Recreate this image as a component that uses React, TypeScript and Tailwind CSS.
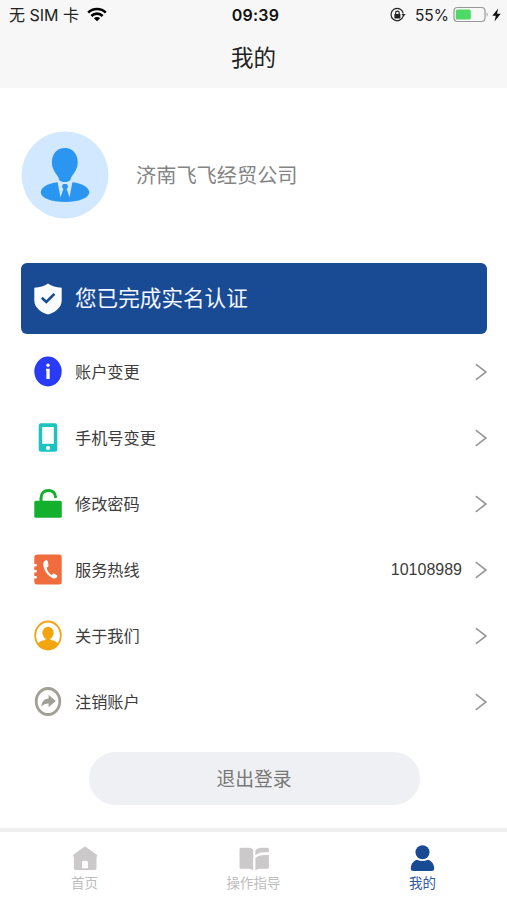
import type { ReactNode } from 'react';

const sans = "font-['Liberation_Sans','Noto_Sans_CJK_SC',sans-serif]";
const inter = "font-['Inter','Noto_Sans_CJK_SC',sans-serif]";

interface MenuItem {
  label: string;
  icon: ReactNode;
  value?: string;
}

function StatusBar() {
  return (
    <div className={`grid grid-cols-3 items-center h-[29px] pl-[9px] pr-[6px] leading-none text-[#222] ${inter}`}>
      <div className="flex items-center whitespace-nowrap">
        <span className="text-[16px]">无 SIM 卡</span>
        <svg className="w-[20px] h-[15px] ml-[8px]" viewBox="0 0 20 15" fill="none" stroke="#000" strokeWidth="2.6">
          <path d="M1.2 5.7a12.4 12.4 0 0 1 17.6 0" />
          <path d="M4.4 9a7.9 7.9 0 0 1 11.2 0" />
          <path d="M10 14.3 6.9 11.2a4.4 4.4 0 0 1 6.2 0z" fill="#000" stroke="none" />
        </svg>
      </div>
      <span className="pl-[1px] text-center text-[16px] font-semibold text-[#111] tracking-[0.2px]">09:39</span>
      <div className="flex items-center justify-end whitespace-nowrap">
        <svg className="w-[16px] h-[16px] mr-[9px]" viewBox="0 0 16 16" fill="none" stroke="#222" strokeWidth="1.2">
          <path d="M13.2 9.2A6.2 6.2 0 1 1 13.3 6.3" />
          <path d="M11.4 7h4.2l-2.1 2.7z" fill="#222" stroke="none" />
          <path d="M5.6 7.4V6a1.8 1.8 0 0 1 3.6 0v1.4" />
          <rect x="4.4" y="7" width="6" height="4.4" rx="0.6" fill="#222" stroke="none" />
        </svg>
        <span className="pt-[2px] text-[15.5px]">55%</span>
        <svg className="w-[36px] h-[17px] ml-[4px]" viewBox="0 0 36 17" fill="none">
          <rect x="1" y="1.5" width="31" height="14" rx="3.5" stroke="#999" strokeWidth="1.2" />
          <rect x="2.8" y="3.5" width="15" height="10" rx="1.5" fill="#4cd964" />
          <path d="M33.6 6.2a3 3 0 0 1 0 4.6z" fill="#999" />
        </svg>
        <svg className="w-[9px] h-[14px] ml-[3px]" viewBox="0 0 9 14" fill="#111">
          <path d="M6.2 0.5 0.3 7.8h3.5L2.5 13.5 8.7 5.8H5z" />
        </svg>
      </div>
    </div>
  );
}

function Avatar() {
  return (
    <svg className="w-[88px] h-[88px]" viewBox="0 0 88 88">
      <circle cx="44" cy="44" r="43.5" fill="#d1e8ff" />
      <path
        d="M43.8 17c-7.8 0-12.9 6-12.9 14.3 0 6.3 3.5 10.7 6 14.2.8 1.3.8 2.5 1.4 3.5 1 1.6 3.2 2 5.5 2s4.5-.4 5.5-2c.6-1 .6-2.2 1.4-3.5 2.5-3.5 6-7.9 6-14.2C56.7 23 51.6 17 43.8 17z"
        fill="#2b95f2"
      />
      <path
        d="M36.6 51.3C26 52.5 19.8 56.8 19.8 61.5c0 5.5 10.7 9.5 24.2 9.5s24.2-4 24.2-9.500c0-4.700-6.200-9-16.800-10.200L48.500 66.500 45.800 58.500h-3.600L39.500 66.500z"
        fill="#2b95f2"
      />
      <path d="M42.2 53h3.6l1.4 2.5-2 3.5h-2.4l-2-3.5zM42.7 58h2.6l2.8 8.500-4.100 3.500-4.100-3.500z" fill="#2b95f2" />
    </svg>
  );
}

function ShieldIcon() {
  return (
    <svg className="w-[28px] h-[32px]" viewBox="0 0 28 32">
      <path
        d="M14 0.5c3.7 2.5 8 4 13.7 4.3v12.7C27.7 25 20 30 14 31.500 8 30 .3 25 .3 17.500V4.800C6 4.500 10.300 3 14 .5z"
        fill="#fafcff"
      />
      <path d="m7.800 14.700 4.500 4.300 8.100-8.200" fill="none" stroke="#194a94" strokeWidth="2.6" />
    </svg>
  );
}

function InfoIcon() {
  return (
    <svg className="w-[28px] h-[31px]" viewBox="0 0 28 31">
      <ellipse cx="14" cy="15.5" rx="13.7" ry="15" fill="#293af8" />
      <ellipse cx="14" cy="9.2" rx="1.7" ry="1.8" fill="#fff" />
      <path d="M12 12.700h3.700v10.200h-3.300v-8.400H12z" fill="#fff" />
    </svg>
  );
}

function PhoneIcon() {
  return (
    <svg className="w-[28px] h-[31px]" viewBox="0 0 28 31">
      <rect x="4.7" y="1.2" width="18.6" height="28.6" rx="2.5" fill="#1cc3bf" />
      <rect x="8.2" y="5" width="11.6" height="16.8" fill="#fff" />
      <circle cx="14" cy="26" r="2.1" fill="#fff" />
    </svg>
  );
}

function LockIcon() {
  return (
    <svg className="w-[28px] h-[31px]" viewBox="0 0 28 31">
      <rect x="0.3" y="12.8" width="27.5" height="17" rx="1.5" fill="#12b02d" />
      <path d="M7 14V10c0-4.700 3.100-7.600 7.300-7.600 3.900 0 6.800 2.200 7.200 6.400" fill="none" stroke="#12b02d" strokeWidth="3" strokeLinecap="round" />
    </svg>
  );
}

function HotlineIcon() {
  return (
    <svg className="w-[28px] h-[31px]" viewBox="0 0 28 31">
      <path
        d="M3 .6h22.200q2.500 0 2.500 2.500v24.800q0 2.500-2.500 2.500H3Q.5 30.400.3 27.900v-3.400h1.400a1.300 1.300 0 0 0 0-2.600H.3v-3.400h1.400a1.300 1.300 0 0 0 0-2.600H.3v-3.400h1.400a1.300 1.300 0 0 0 0-2.600H.3V3.100Q.5.6 3 .6z"
        fill="#f16c3c"
      />
      <path
        d="M11.800 6.300c-2 .7-2.700 2.200-2.500 4.500.5 6 4.700 11.500 10.200 13.600 1.700.6 3.200-.2 3.700-1.800.2-.8 0-1.300-.7-1.700l-2.300-1.200c-.7-.4-1.300-.2-1.700.5l-.7 1c-2.700-1.500-4.800-4.700-5.200-7.700l1.200-.6c.6-.3.8-.8.7-1.400l-.6-3.700c-.2-1.200-1-1.900-2.100-1.500z"
        fill="#fff"
      />
    </svg>
  );
}

function AboutIcon() {
  return (
    <svg className="w-[28px] h-[31px]" viewBox="0 0 28 31">
      <ellipse cx="14" cy="15.5" rx="12.8" ry="14" fill="#fff" stroke="#f2a50f" strokeWidth="1.8" />
      <ellipse cx="14" cy="12.9" rx="5.6" ry="6.2" fill="#f2a50f" />
      <path d="M11.500 17h5v3c3.600.5 6.300 1.700 7.700 4-2.400 3.700-6 5.800-10.200 5.800S6.200 27.700 3.800 24c1.400-2.300 4.100-3.500 7.700-4z" fill="#f2a50f" />
    </svg>
  );
}

function CancelIcon() {
  return (
    <svg className="w-[28px] h-[31px]" viewBox="0 0 28 31">
      <ellipse cx="14" cy="15.5" rx="11.8" ry="13" fill="#fff" stroke="#a19f96" strokeWidth="2.8" />
      <path d="M14.600 8.800 21.800 15l-7.200 6.200v-3.600c-3.300 0-5.300.8-7.300 3.200.3-4.900 2.500-7.700 7.300-8.300z" fill="#a19f96" />
    </svg>
  );
}

function Arrow() {
  return (
    <svg className="w-[12px] h-[18px]" viewBox="0 0 12 18" fill="none" stroke="#999" strokeWidth="1.6">
      <path d="M.8 1.200 10.900 9 .8 16.800" />
    </svg>
  );
}

const menuItems: MenuItem[] = [
  { label: '账户变更', icon: <InfoIcon /> },
  { label: '手机号变更', icon: <PhoneIcon /> },
  { label: '修改密码', icon: <LockIcon /> },
  { label: '服务热线', icon: <HotlineIcon />, value: '10108989' },
  { label: '关于我们', icon: <AboutIcon /> },
  { label: '注销账户', icon: <CancelIcon /> },
];

const tabs = [
  {
    label: '首页',
    active: false,
    icon: (
      <svg className="w-[28px] h-[28px]" viewBox="0 0 28 28" fill="#cbc9ca">
        <path
          fillRule="evenodd"
          d="M13 1.900q1-.8 2 0l10.500 7.700q1 .8.700 1.400t-.7.700v11.600q0 1.700-1.700 1.700H4.600q-1.700 0-1.700-1.700V11.700q-.6-.1-.8-.7t.6-1.400zM11 23.200h6v-5.700q0-1.700-1.700-1.700h-2.600q-1.700 0-1.700 1.700z"
        />
      </svg>
    ),
  },
  {
    label: '操作指导',
    active: false,
    icon: (
      <svg className="w-[32px] h-[28px]" viewBox="0 0 32 28" fill="#cbc9ca">
        <path d="M3 2.700h7.700q2.700 0 4.500 1.700v20.800q-2-1.500-4.500-1.500H3q-1.500 0-1.500-1.500v-18q0-1.500 1.500-1.500z" />
        <path d="M17.400 5.300q2-2.600 5-2.600h7q1.500 0 1.500 1.500v3.100h-4.500q-5.500 0-9 3z" />
        <path d="M17.400 12.900q3.500-3 9-3h4.500v12.300q0 1.500-1.500 1.500h-7.500q-2.500 0-4.500 1.500z" />
      </svg>
    ),
  },
  {
    label: '我的',
    active: true,
    icon: (
      <svg className="w-[28px] h-[28px]" viewBox="0 0 28 28" fill="#194a94">
        <ellipse cx="13.5" cy="7.2" rx="7" ry="7" />
        <path d="M8 14.700q5.500 2.500 11 0c3.800 1.200 6.200 4.500 6.200 8.900q0 2.500-2.700 2.500h-18q-2.700 0-2.700-2.500c0-4.400 2.400-7.700 6.200-8.900z" />
      </svg>
    ),
  },
];

export default function App() {
  return (
    <div className={`flex flex-col w-full h-[900px] overflow-hidden bg-white ${sans}`}>
      <header className="h-[88px] shrink-0 bg-[#f7f7f7]">
        <StatusBar />
        <h1 className="pt-[13px] text-center text-[22.5px] leading-[34px] text-[#222]">我的</h1>
      </header>

      <main className="flex-1 pl-[21px] pr-[20px]">
        <section className="flex items-center gap-[27px] pt-[43px]">
          <Avatar />
          <span className="pt-[2px] text-[20.2px] text-[#848484]">济南飞飞经贸公司</span>
        </section>

        <div className="flex items-center gap-[13px] mt-[44px] h-[71px] pl-[13px] rounded-[6px] bg-[#194a94]">
          <ShieldIcon />
          <span className="pt-[2px] text-[21.6px] text-[#f4f8ff]">您已完成实名认证</span>
        </div>

        <ul className="pt-[4.5px]">
          {menuItems.map((item) => (
            <li key={item.label} className="flex items-center h-[66px] pl-[13px] text-[16.2px] text-[#3c3c3c]">
              {item.icon}
              <span className="ml-[13px] pt-[1px] flex-1">{item.label}</span>
              {item.value && <span className="mr-[13px] pt-[1px] text-[16px]">{item.value}</span>}
              <Arrow />
            </li>
          ))}
        </ul>

        <button className="block w-[331px] h-[53px] mx-auto mt-[17.5px] pt-[4px] rounded-full bg-[#eff0f4] text-[18.8px] text-[#777]">
          退出登录
        </button>
      </main>

      <nav className="grid grid-cols-3 h-[72px] shrink-0 border-t-4 border-[#f0f0f0] pt-[13px]">
        {tabs.map((tab) => (
          <div key={tab.label} className="flex flex-col items-center">
            {tab.icon}
            <span className={`pt-[1px] text-[13.5px] leading-[20px] ${tab.active ? 'text-[#3158a5]' : 'text-[#bdbdbd]'}`}>
              {tab.label}
            </span>
          </div>
        ))}
      </nav>
    </div>
  );
}
